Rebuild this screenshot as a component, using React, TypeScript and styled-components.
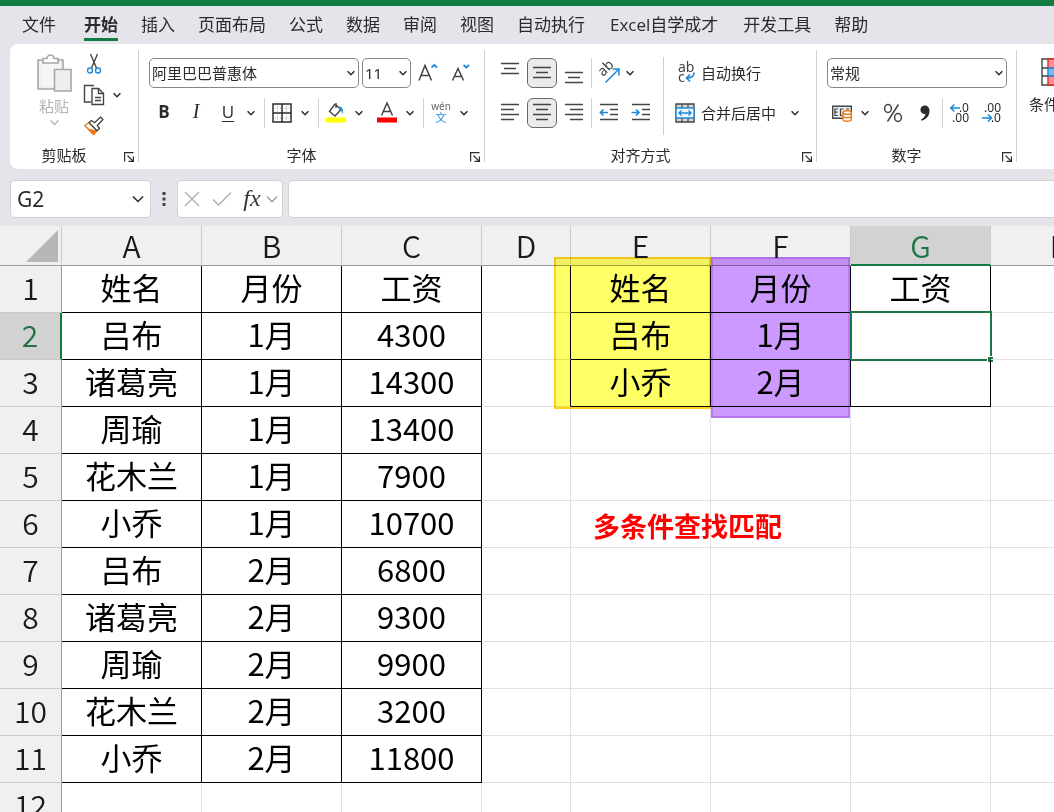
import React from "react";
import styled, { createGlobalStyle, css } from "styled-components";

const GREEN = "#107c41";
const SELECT = "#217346";
const INK = "#2b2b2b";
const STROKE = "#444444";
const BLUE = "#1e8ad6";
const ORANGE = "#ec7a1c";

const GlobalStyle = createGlobalStyle`
  *, *::before, *::after { box-sizing: border-box; }
  html, body { margin: 0; height: 100%; overflow: hidden; }
  body, button, input, select {
    font-family: "Noto Sans CJK SC", "Noto Sans", sans-serif;
    color: ${INK};
  }
  button {
    padding: 0;
    border: 0;
    background: none;
    cursor: pointer;
  }
  svg { display: block; flex: none; overflow: visible; }
`;

const Window = styled.div`
  display: flex;
  flex-direction: column;
  height: 100vh;
  overflow: hidden;
  background: #e5e4eb;
  border-top: 6px solid ${GREEN};
`;

/* ---------- tabs ---------- */

const TabBar = styled.nav`
  display: flex;
  flex: none;
  gap: 23px;
  height: 38px;
  padding: 6px 22px 0;
`;

const Tab = styled.button<{ $active?: boolean; $first?: boolean; $custom?: boolean }>`
  height: 29px;
  margin-right: ${(p) => (p.$first ? 5 : 0)}px;
  padding: 0 ${(p) => (p.$custom ? 2 : 0)}px;
  font-family: "Open Sans", "Noto Sans CJK SC", sans-serif;
  font-size: 17px;
  line-height: 24px;
  white-space: nowrap;
  border-bottom: 3px solid ${(p) => (p.$active ? GREEN : "transparent")};
  font-weight: ${(p) => (p.$active ? 700 : 400)};
`;

/* ---------- ribbon ---------- */

const Ribbon = styled.section`
  display: flex;
  flex: none;
  margin-left: 10px;
  padding: 6px 0 7px;
  background: #fff;
  border-radius: 8px 0 0 8px;
  overflow: hidden;
`;

const Group = styled.section<{ $width?: number }>`
  display: flex;
  flex: none;
  flex-direction: column;
  width: ${(p) => (p.$width ? `${p.$width}px` : "auto")};
  border-right: 1px solid #d0d0d0;

  &:last-child { border-right: 0; }
`;

const GroupBody = styled.div`
  display: flex;
  flex: 1;
  align-items: flex-start;
  padding: 8px 0 7px 10px;
`;

const GroupFooter = styled.footer`
  display: grid;
  grid-template-columns: 1fr 16px;
  height: 14px;
  padding-right: 4px;
  font-size: 15px;
  line-height: 14px;
  text-align: center;
`;

const Launcher = styled.button`
  display: flex;
  align-items: flex-end;
  justify-content: flex-end;
`;

const Stack = styled.div`
  display: flex;
  flex-direction: column;
  gap: 10px;
`;

const Row = styled.div<{ $gap?: number; $indent?: number }>`
  display: flex;
  align-items: center;
  height: 30px;
  gap: ${(p) => p.$gap ?? 0}px;
  padding-left: ${(p) => p.$indent ?? 0}px;
`;

const Divider = styled.span<{ $gap?: number; $tall?: boolean }>`
  flex: none;
  width: 1px;
  height: ${(p) => (p.$tall ? 78 : 30)}px;
  margin: 0 ${(p) => p.$gap ?? 0}px;
  background: #d0d0d0;
`;

const Tool = styled.button<{ $size?: number; $on?: boolean }>`
  display: flex;
  flex: none;
  align-items: center;
  justify-content: center;
  width: ${(p) => p.$size ?? 20}px;
  height: 30px;
  ${(p) =>
    p.$on &&
    css`
      background: #ebebeb;
      border: 1px solid #6a6a6a;
      border-radius: 6px;
    `}
`;

const Letter = styled(Tool)<{ $bold?: boolean; $italic?: boolean; $under?: boolean }>`
  padding-bottom: 3px;
  font-family: ${(p) => (p.$italic ? '"Liberation Serif", serif' : '"Open Sans", sans-serif')};
  font-size: ${(p) => (p.$italic ? 20 : 17)}px;
  font-weight: ${(p) => (p.$bold ? 700 : 400)};
  font-style: ${(p) => (p.$italic ? "italic" : "normal")};
  text-decoration: ${(p) => (p.$under ? "underline" : "none")};
  text-underline-offset: 3px;
`;

const Split = styled.span`
  display: flex;
  flex: none;
  gap: 7px;
`;

const ArrowButton = styled.button`
  display: flex;
  flex: none;
  align-items: center;
  justify-content: center;
  width: 12px;
  height: 30px;
`;

const Picker = styled.label<{ $width: number }>`
  display: grid;
  align-items: center;
  width: ${(p) => p.$width}px;
  height: 30px;
  border: 1px solid #868686;
  border-radius: 5px;

  select, svg { grid-area: 1 / 1; }
  svg { justify-self: end; margin-right: 3px; pointer-events: none; }
`;

const PickerSelect = styled.select`
  width: 100%;
  height: 28px;
  padding: 0 14px 0 2px;
  border: 0;
  background: none;
  appearance: none;
  font-family: "Noto Sans", "Noto Sans CJK SC", sans-serif;
  font-size: 15px;
`;

const Labelled = styled.button`
  display: flex;
  align-items: center;
  gap: 6px;
  height: 30px;
  font-size: 15px;
  line-height: 28px;
  white-space: nowrap;
`;

const BigButton = styled.button<{ $faded?: boolean; $gap: number }>`
  display: flex;
  flex: none;
  flex-direction: column;
  align-items: center;
  gap: ${(p) => p.$gap}px;
  font-size: 15px;
  line-height: 16px;
  color: ${(p) => (p.$faded ? "#b3b3b3" : INK)};
`;

const PasteArea = styled.div`
  display: flex;
  align-items: flex-start;
  gap: 12px;
  margin: -9px 0 0 16px;

  > ${BigButton} { margin-top: 5px; }
`;

const ClipTools = styled.div`
  display: flex;
  flex-direction: column;
  gap: 1px;
`;

const AlignDivider = styled.div`
  display: flex;
  margin: -1px 11px 0 7px;
`;

const StyleTools = styled.div`
  padding-left: 2px;
`;

/* ---------- formula bar ---------- */

const FormulaBar = styled.section`
  display: flex;
  flex: none;
  align-items: stretch;
  height: 57px;
  padding: 11px 0 8px 10px;
`;

const Field = styled.div<{ $width?: number }>`
  display: flex;
  flex: ${(p) => (p.$width ? "none" : 1)};
  align-items: center;
  width: ${(p) => (p.$width ? `${p.$width}px` : "auto")};
  border: 1px solid #d2d2d6;
  border-radius: 5px;
  background: #fff;
`;

const FieldInput = styled.input`
  flex: 1;
  min-width: 0;
  height: 34px;
  padding: 0 6px;
  border: 0;
  outline: 0;
  background: none;
  font-family: "Noto Sans", sans-serif;
  font-size: 21px;
`;

const Grip = styled.span`
  display: flex;
  align-items: center;
  justify-content: center;
  width: 26px;
`;

const FxLabel = styled(Tool)`
  padding-bottom: 2px;
  font-family: "Liberation Serif", serif;
  font-size: 24px;
  font-style: italic;
  color: #333;
`;

const FxTools = styled(Field)`
  padding-left: 4px;
`;

const FormulaField = styled(Field)`
  margin-left: 5px;
  border-right: 0;
  border-radius: 5px 0 0 5px;
`;

/* ---------- sheet ---------- */

const SheetArea = styled.main`
  position: relative;
  flex: 1;
  min-height: 0;
  overflow: hidden;
  background: #fff;
`;

const Table = styled.table`
  width: 1131px;
  table-layout: fixed;
  border-collapse: separate;
  border-spacing: 0;
`;

const headCell = css<{ $active?: boolean }>`
  padding: 0;
  font-size: 30px;
  font-weight: 350;
  vertical-align: top;
  color: ${(p) => (p.$active ? SELECT : "#1a1a1a")};
  background: ${(p) => (p.$active ? "#d2d2d2" : "#f0f0f0")};
`;

const ColHead = styled.th<{ $active?: boolean }>`
  ${headCell}
  height: 40px;
  line-height: 38px;
  border-right: 1px solid #c9c9c9;
  border-bottom: ${(p) => (p.$active ? `2px solid ${GREEN}` : "1px solid #9b9b9b")};
`;

const RowHead = styled.th<{ $active?: boolean }>`
  ${headCell}
  height: 47px;
  line-height: 42px;
  border-bottom: 1px solid #c9c9c9;
  border-right: ${(p) => (p.$active ? `2px solid ${GREEN}` : "1px solid #9b9b9b")};
`;

const Corner = styled.th`
  height: 40px;
  padding: 0 3px 3px 0;
  vertical-align: bottom;
  background: #f0f0f0;
  border-right: 1px solid #c9c9c9;
  border-bottom: 1px solid #9b9b9b;

  svg { margin-left: auto; }
`;

const Cell = styled.td<{ $right?: boolean; $bottom?: boolean }>`
  position: relative;
  height: 47px;
  padding: 0;
  font-size: 31px;
  line-height: 42px;
  vertical-align: top;
  text-align: center;
  white-space: nowrap;
  color: #000;
  border-right: 1px solid ${(p) => (p.$right ? "#000" : "#e1e1e1")};
  border-bottom: 1px solid ${(p) => (p.$bottom ? "#000" : "#e1e1e1")};
`;

const Selection = styled.span`
  position: absolute;
  inset: -2px -2px -2px -1px;
  border: 2px solid ${SELECT};

  &::after {
    content: "";
    position: absolute;
    right: -4px;
    bottom: -4px;
    width: 7px;
    height: 7px;
    background: ${SELECT};
    border: 1px solid #fff;
  }
`;

const Highlight = styled.div<{ $left: number; $width: number; $height: number; $fill: string; $line: string }>`
  position: absolute;
  top: 31px;
  left: ${(p) => p.$left}px;
  width: ${(p) => p.$width}px;
  height: ${(p) => p.$height}px;
  background: ${(p) => p.$fill};
  border: 2px solid ${(p) => p.$line};
  mix-blend-mode: multiply;
  pointer-events: none;
`;

const Note = styled.p`
  position: absolute;
  top: 280px;
  left: 593px;
  margin: 0;
  font-size: 27px;
  font-weight: 700;
  line-height: 40px;
  color: #ff0000;
`;

/* ---------- icons ---------- */

const Chevron = ({ size = 8, color = INK, weight = 1.5 }: { size?: number; color?: string; weight?: number }) => (
  <svg width={size} height={size} viewBox="0 0 8 8" fill="none" stroke={color} strokeWidth={(weight * 8) / size}>
    <path d="M0.6 2.3 4 5.7 7.4 2.3" />
  </svg>
);

const Arrow = ({ label }: { label: string }) => (
  <ArrowButton aria-label={label}>
    <Chevron />
  </ArrowButton>
);

const LaunchIcon = () => (
  <svg width="10" height="10" viewBox="0 0 10 10" fill="none" stroke={INK} strokeWidth="1.2">
    <path d="M0.6 9.5V0.6H9.5M3.5 3.5l5.3 5.3M9.4 4.5V9.4H4.5" />
  </svg>
);

const PasteIcon = () => (
  <svg width="36" height="40" viewBox="0 0 36 40" fill="#efefef" stroke="#a6a6a6" strokeWidth="1.6">
    <path d="M2 6h25v29H2z" />
    <path d="M5 9h19v23H5z" fill="#f6f6f6" stroke="none" />
    <path d="M7 9V4.5h4a3.5 3.5 0 0 1 7 0h4V9z" fill="#fff" />
    <path d="M18.5 15.5H35V37H18.5z" />
  </svg>
);

const CutIcon = () => (
  <svg width="16" height="22" viewBox="0 0 16 22" fill="none" strokeWidth="1.4">
    <path d="M4.5 1 10.7 15.5M11.5 1 5.3 15.5" stroke={STROKE} />
    <circle cx="4" cy="17.5" r="2.5" stroke={BLUE} />
    <circle cx="12" cy="17.5" r="2.5" stroke={BLUE} />
  </svg>
);

const CopyIcon = () => (
  <svg width="22" height="22" viewBox="0 0 22 22" fill="#fff" stroke={STROKE} strokeWidth="1.4">
    <path d="M8 18H1.5V1.5H11" />
    <path d="M9 4.5h6.5l5 5v11H9z" />
    <path d="M15.5 4.5v5h5M12 13.5h6M12 16.5h6" fill="none" />
  </svg>
);

const BrushIcon = () => (
  <svg width="20" height="20" viewBox="0 0 20 20" fill="none" strokeWidth="1.3" strokeLinejoin="round">
    <path d="M5 6.5.8 9.5 9.5 18.8l3.5-4z" fill="#fff" stroke={ORANGE} />
    <path d="M3.5 12.5 13 14.5l-3.5 4.3z" fill={ORANGE} />
    <path d="M5 6.5 7.5 4.5l3 2.2L16.5 1 19 3.5 13.3 9.5l2.2 3-2.5 2.2z" fill="#fff" stroke={STROKE} />
  </svg>
);

const GrowIcon = ({ shrink }: { shrink?: boolean }) => (
  <svg width="20" height="22" viewBox="0 0 20 22" fill="none">
    <path
      d={shrink ? "M2.5 18.5 8 6.5 13.5 18.5M4.5 14.5h7" : "M1 18.5 7 3.5 13.5 18.5M3 13.5h8.5"}
      stroke={STROKE}
      strokeWidth="1.5"
    />
    <path d={shrink ? "M13.5 3l2.8 2.5L19 3" : "M13.5 5.500l2.8-2.5L19 5.500"} stroke={BLUE} strokeWidth="1.8" />
  </svg>
);

const BorderIcon = () => (
  <svg width="20" height="20" viewBox="0 0 20 20" fill="none" stroke={INK}>
    <path d="M1 1h18v18H1zM10 1v18M1 10h18" strokeWidth="1.5" />
    <path d="M3 5h14M3 15h14M5.5 3v14M14.5 3v14" strokeWidth="0.8" strokeDasharray="1 1.5" stroke="#999" />
  </svg>
);

const FillIcon = () => (
  <svg width="20" height="22" viewBox="0 0 20 22" fill="none">
    <path d="M9 2 3.5 9.5 9 14l6-6.5-5-4.5M10 1v5" stroke={STROKE} strokeWidth="1.4" />
    <path d="M13.5 4.5c3 .5 4 3.5 3 7.5-.5-2.5-1.5-3.5-3-4z" fill={BLUE} />
    <path d="M0 15.5h20v5H0z" fill="#ffff00" />
  </svg>
);

const FontColorIcon = () => (
  <svg width="20" height="22" viewBox="0 0 20 22" fill="none">
    <path d="M4.5 13.5 10 1l5.5 12.5M6.5 9.5h7" stroke={STROKE} strokeWidth="1.5" />
    <path d="M0 15.5h20v5H0z" fill="#ff0000" />
  </svg>
);

const PhoneticIcon = () => (
  <svg width="20" height="22" viewBox="0 0 20 22" textAnchor="middle" fontSize="10">
    <text fill="#666" fontFamily="Noto Sans, Noto Sans CJK SC, sans-serif">
      <tspan x="10" y="8">wén</tspan>
      <tspan x="10" y="20" fill={BLUE} fontSize="11">文</tspan>
    </text>
  </svg>
);

const Lines = ({ d }: { d: string }) => (
  <svg width="20" height="20" viewBox="0 0 20 20" fill="none" stroke={STROKE} strokeWidth="1.4">
    <path d={d} />
  </svg>
);

const IndentIcon = ({ right }: { right?: boolean }) => (
  <svg width="20" height="20" viewBox="0 0 20 20" fill="none" strokeWidth="1.5">
    <path d="M1 1.5h18M11 6.5h8M11 11.5h8M1 16.5h18" stroke={STROKE} />
    <path d={right ? "M0.5 9.5h7.5M5 6.5l3 3-3 3" : "M9 9.5H1.5M4.5 6.5l-3 3 3 3"} stroke={BLUE} strokeWidth="1.7" />
  </svg>
);

const OrientIcon = () => (
  <svg width="22" height="22" viewBox="0 0 22 22" fill="none">
    <text x="5" y="15" fontSize="14" fill={STROKE} fontFamily="Noto Sans, sans-serif" transform="rotate(-45 5 15)">ab</text>
    <path d="M7.5 20.5 20.5 7.5M14.5 7H21v6.5" stroke={BLUE} strokeWidth="1.5" />
  </svg>
);

const WrapIcon = () => (
  <svg width="20" height="22" viewBox="0 0 20 22" fill="none">
    <text fontFamily="Noto Sans, sans-serif" fontSize="14" fill={STROKE}>
      <tspan x="3" y="10">ab</tspan>
      <tspan x="3" y="20">c</tspan>
    </text>
    <path d="M19 10.5c0 4-2.5 5.5-7 5.5M15 12.5 11.5 16l3.5 3.5" stroke={BLUE} strokeWidth="1.7" />
  </svg>
);

const MergeIcon = () => (
  <svg width="20" height="20" viewBox="0 0 20 20" fill="none">
    <path d="M1 1h18v18H1z" fill="#d6d6d6" stroke={STROKE} strokeWidth="1.4" />
    <path d="M7 1v18M13 1v18" stroke={STROKE} strokeWidth="1.2" />
    <path d="M1 5h18v10H1z" fill="#eef7fd" stroke={BLUE} strokeWidth="1.4" />
    <path d="M4 10h12M6.5 7.5 4 10l2.5 2.5M13.5 7.5 16 10l-2.5 2.5" stroke={BLUE} strokeWidth="1.4" />
  </svg>
);

const CurrencyIcon = () => (
  <svg width="20" height="18" viewBox="0 0 20 18" fill="none">
    <path d="M.7 2.2h18.6v12H.7z" fill="#ededed" stroke={STROKE} strokeWidth="1.4" />
    <path d="M6 5H3v6.5h3M3 8.2h2.5M11.5 5H8.5v6.5H10M17 5h-3" stroke={STROKE} strokeWidth="1.2" />
    <path d="M11 8.5V15.5c0 2.3 8.3 2.3 8.3 0V8.5z" fill="#fff" stroke={ORANGE} strokeWidth="1.5" />
    <ellipse cx="15.2" cy="8.5" rx="4.2" ry="1.8" fill="#fff" stroke={ORANGE} strokeWidth="1.5" />
    <path d="M11 12c0 2.2 8.3 2.2 8.3 0" stroke={ORANGE} strokeWidth="1.5" />
  </svg>
);

const PercentIcon = () => (
  <svg width="20" height="20" viewBox="0 0 20 20" fill="none" stroke={STROKE} strokeWidth="1.5">
    <ellipse cx="5" cy="5.5" rx="3.4" ry="4" />
    <ellipse cx="15" cy="14.5" rx="3.4" ry="4" />
    <path d="M15.5 1.5 4.5 18.5" />
  </svg>
);

const CommaIcon = () => (
  <svg width="12" height="18" viewBox="0 0 12 18" fill={INK}>
    <path d="M5.5 1.5A4.2 4.2 0 1 0 6.5 9.8C6 12.5 4.5 14.3 2 15.6l.8 1.2C8 14.8 10.5 11.5 10.5 6.8 10.5 3.5 8.5 1.5 5.5 1.5z" />
  </svg>
);

const DecimalIcon = ({ less }: { less?: boolean }) => (
  <svg width="20" height="22" viewBox="0 0 20 22" fill="none">
    <text fontFamily="Noto Sans, sans-serif" fontSize="12" textAnchor="end" fill={INK}>
      <tspan x="19" y="10">{less ? ".00" : ".0"}</tspan>
      <tspan x="19" y="20">{less ? ".0" : ".00"}</tspan>
    </text>
    <path
      d={less ? "M0 16h9.5M6 12.5 9.5 16 6 19.5" : "M10 6H.8M4.3 2.5.8 6l3.5 3.5"}
      stroke={BLUE}
      strokeWidth="1.6"
    />
  </svg>
);

const ConditionIcon = () => (
  <svg width="36" height="28" viewBox="0 0 36 28" strokeWidth="1.4">
    <path d="M1 1h34v26H1z" fill="#fff" stroke={STROKE} />
    <path d="M7 1h20v9H7zM7 18h20v9H7z" fill="#ff8f94" stroke="#e0262d" />
    <path d="M7 10h14v8H7z" fill="#7db9ea" stroke={BLUE} />
    <path d="M1 10h6M1 18h6" stroke={STROKE} />
  </svg>
);

const GripIcon = () => (
  <svg width="4" height="16" viewBox="0 0 4 16" fill="#444">
    <path d="M.5 1h3v3h-3zM.5 6.5h3v3h-3zM.5 12h3v3h-3z" />
  </svg>
);

const CancelIcon = () => (
  <svg width="16" height="16" viewBox="0 0 16 16" stroke="#ababab" strokeWidth="1.3">
    <path d="M1 1l14 14M15 1 1 15" />
  </svg>
);

const AcceptIcon = () => (
  <svg width="20" height="16" viewBox="0 0 20 16" fill="none" stroke="#ababab" strokeWidth="1.3">
    <path d="M1 8.5 6.5 14 19 1.5" />
  </svg>
);

const CornerIcon = () => (
  <svg width="32" height="32" viewBox="0 0 32 32" fill="#b7b7b7">
    <path d="M32 0v32H0z" />
  </svg>
);

/* ---------- data ---------- */

const tabs = ["文件", "开始", "插入", "页面布局", "公式", "数据", "审阅", "视图", "自动执行", "Excel自学成才", "开发工具", "帮助"];

const columns = [
  { name: "A", width: 140 },
  { name: "B", width: 140 },
  { name: "C", width: 140 },
  { name: "D", width: 89 },
  { name: "E", width: 140 },
  { name: "F", width: 140 },
  { name: "G", width: 140 },
  { name: "H", width: 140 },
];

const rows: string[][] = [
  ["姓名", "月份", "工资", "", "姓名", "月份", "工资"],
  ["吕布", "1月", "4300", "", "吕布", "1月", ""],
  ["诸葛亮", "1月", "14300", "", "小乔", "2月", ""],
  ["周瑜", "1月", "13400"],
  ["花木兰", "1月", "7900"],
  ["小乔", "1月", "10700"],
  ["吕布", "2月", "6800"],
  ["诸葛亮", "2月", "9300"],
  ["周瑜", "2月", "9900"],
  ["花木兰", "2月", "3200"],
  ["小乔", "2月", "11800"],
  [],
];

const inSalaryTable = (row: number, col: number) => row < 11 && col < 3;
const inLookupTable = (row: number, col: number) => row < 3 && col > 3 && col < 7;
const framed = (row: number, col: number) => inSalaryTable(row, col) || inLookupTable(row, col);

const Footer = ({ label }: { label: string }) => (
  <GroupFooter>
    <span>{label}</span>
    <Launcher aria-label={`${label}设置`}>
      <LaunchIcon />
    </Launcher>
  </GroupFooter>
);

const Dropdown = ({ label, value, width }: { label: string; value: string; width: number }) => (
  <Picker $width={width}>
    <PickerSelect aria-label={label} defaultValue={value}>
      <option>{value}</option>
    </PickerSelect>
    <Chevron />
  </Picker>
);

export default function App() {
  return (
    <Window>
      <GlobalStyle />
      <TabBar>
        {tabs.map((t, i) => (
          <Tab key={t} $active={t === "开始"} $first={i === 0} $custom={t.startsWith("Excel")}>
            {t}
          </Tab>
        ))}
      </TabBar>

      <Ribbon>
        <Group $width={129}>
          <GroupBody>
            <PasteArea>
              <BigButton $faded $gap={4}>
                <PasteIcon />
                粘贴
                <Chevron color="#b3b3b3" size={9} />
              </BigButton>
              <ClipTools>
                <Tool aria-label="剪切"><CutIcon /></Tool>
                <Split>
                  <Tool aria-label="复制"><CopyIcon /></Tool>
                  <Arrow label="复制选项" />
                </Split>
                <Tool aria-label="格式刷"><BrushIcon /></Tool>
              </ClipTools>
            </PasteArea>
          </GroupBody>
          <Footer label="剪贴板" />
        </Group>

        <Group $width={346}>
          <GroupBody>
            <Stack>
              <Row>
                <Row $gap={3}>
                  <Dropdown label="字体" value="阿里巴巴普惠体" width={210} />
                  <Dropdown label="字号" value="11" width={49} />
                </Row>
                <Row $gap={12} $indent={7}>
                  <Tool aria-label="增大字号"><GrowIcon /></Tool>
                  <Tool aria-label="减小字号"><GrowIcon shrink /></Tool>
                </Row>
              </Row>
              <Row $indent={5}>
                <Row $gap={12}>
                  <Letter $bold>B</Letter>
                  <Letter $italic>I</Letter>
                  <Split>
                    <Letter $under>U</Letter>
                    <Arrow label="下划线选项" />
                  </Split>
                </Row>
                <Divider $gap={7} />
                <Split>
                  <Tool aria-label="边框"><BorderIcon /></Tool>
                  <Arrow label="边框选项" />
                </Split>
                <Divider $gap={7} />
                <Row $gap={12}>
                  <Split>
                    <Tool aria-label="填充颜色"><FillIcon /></Tool>
                    <Arrow label="填充颜色选项" />
                  </Split>
                  <Split>
                    <Tool aria-label="字体颜色"><FontColorIcon /></Tool>
                    <Arrow label="字体颜色选项" />
                  </Split>
                </Row>
                <Divider $gap={7} />
                <Split>
                  <Tool aria-label="拼音"><PhoneticIcon /></Tool>
                  <Arrow label="拼音选项" />
                </Split>
              </Row>
            </Stack>
          </GroupBody>
          <Footer label="字体" />
        </Group>

        <Group $width={332}>
          <GroupBody>
            <Stack>
              <Row $gap={2}>
                <Tool $size={30} aria-label="顶端对齐"><Lines d="M1 .5h18M4 5.5h12M1 10.5h18" /></Tool>
                <Tool $size={30} $on aria-label="垂直居中"><Lines d="M1 4.5h18M4 9.5h12M1 14.5h18" /></Tool>
                <Tool $size={30} aria-label="底端对齐"><Lines d="M1 9.5h18M4 14.5h12M1 19.5h18" /></Tool>
                <Divider />
                <Row>
                  <Tool $size={30} aria-label="方向"><OrientIcon /></Tool>
                  <Arrow label="方向选项" />
                </Row>
              </Row>
              <Row $gap={2}>
                <Tool $size={30} aria-label="左对齐"><Lines d="M1 1.5h18M1 6.5h13M1 11.5h18M1 16.5h13" /></Tool>
                <Tool $size={30} $on aria-label="居中"><Lines d="M1 1.5h18M4 6.5h12M1 11.5h18M4 16.5h12" /></Tool>
                <Tool $size={30} aria-label="右对齐"><Lines d="M1 1.5h18M6 6.5h13M1 11.5h18M6 16.5h13" /></Tool>
                <Divider />
                <Tool $size={30} aria-label="减少缩进"><IndentIcon /></Tool>
                <Tool $size={30} aria-label="增加缩进"><IndentIcon right /></Tool>
              </Row>
            </Stack>
            <AlignDivider><Divider $tall /></AlignDivider>
            <Stack>
              <Labelled><WrapIcon />自动换行</Labelled>
              <Row $gap={13}>
                <Labelled><MergeIcon />合并后居中</Labelled>
                <Arrow label="合并选项" />
              </Row>
            </Stack>
          </GroupBody>
          <Footer label="对齐方式" />
        </Group>

        <Group $width={200}>
          <GroupBody>
            <Stack>
              <Dropdown label="数字格式" value="常规" width={180} />
              <Row $indent={5}>
                <Row $gap={12}>
                  <Split>
                    <Tool aria-label="会计数字格式"><CurrencyIcon /></Tool>
                    <Arrow label="会计格式选项" />
                  </Split>
                  <Tool aria-label="百分比样式"><PercentIcon /></Tool>
                  <Tool aria-label="千位分隔样式"><CommaIcon /></Tool>
                </Row>
                <Divider $gap={7} />
                <Row $gap={12}>
                  <Tool aria-label="增加小数位数"><DecimalIcon /></Tool>
                  <Tool aria-label="减少小数位数"><DecimalIcon less /></Tool>
                </Row>
              </Row>
            </Stack>
          </GroupBody>
          <Footer label="数字" />
        </Group>

        <Group>
          <GroupBody>
            <StyleTools>
              <BigButton $gap={10}>
                <ConditionIcon />
                条件格式
              </BigButton>
            </StyleTools>
          </GroupBody>
        </Group>
      </Ribbon>

      <FormulaBar>
        <Field $width={141}>
          <FieldInput aria-label="名称框" defaultValue="G2" />
          <Tool $size={24} aria-label="名称列表"><Chevron size={12} /></Tool>
        </Field>
        <Grip><GripIcon /></Grip>
        <FxTools $width={106}>
          <Tool aria-label="取消"><CancelIcon /></Tool>
          <Tool $size={40} aria-label="输入"><AcceptIcon /></Tool>
          <FxLabel aria-label="插入函数">fx</FxLabel>
          <Tool aria-label="函数选项"><Chevron size={12} color="#8a8a8a" weight={1.2} /></Tool>
        </FxTools>
        <FormulaField>
          <FieldInput aria-label="编辑栏" />
        </FormulaField>
      </FormulaBar>

      <SheetArea>
        <Table>
          <colgroup>
            <col width={62} />
            {columns.map((c) => (
              <col key={c.name} width={c.width} />
            ))}
          </colgroup>
          <thead>
            <tr>
              <Corner aria-label="全选"><CornerIcon /></Corner>
              {columns.map((c) => (
                <ColHead key={c.name} $active={c.name === "G"} scope="col">
                  {c.name}
                </ColHead>
              ))}
            </tr>
          </thead>
          <tbody>
            {rows.map((row, r) => (
              <tr key={r}>
                <RowHead $active={r === 1} scope="row">{r + 1}</RowHead>
                {columns.map((c, i) => (
                  <Cell
                    key={c.name}
                    $right={framed(r, i) || inLookupTable(r, i + 1)}
                    $bottom={framed(r, i)}
                  >
                    {row[i]}
                    {r === 1 && c.name === "G" && <Selection />}
                  </Cell>
                ))}
              </tr>
            ))}
          </tbody>
        </Table>
        <Highlight $left={554} $width={157} $height={152} $fill="#ffff66" $line="#ffd21f" />
        <Highlight $left={711} $width={139} $height={161} $fill="#cc99ff" $line="#bb78f5" />
        <Note>多条件查找匹配</Note>
      </SheetArea>
    </Window>
  );
}
